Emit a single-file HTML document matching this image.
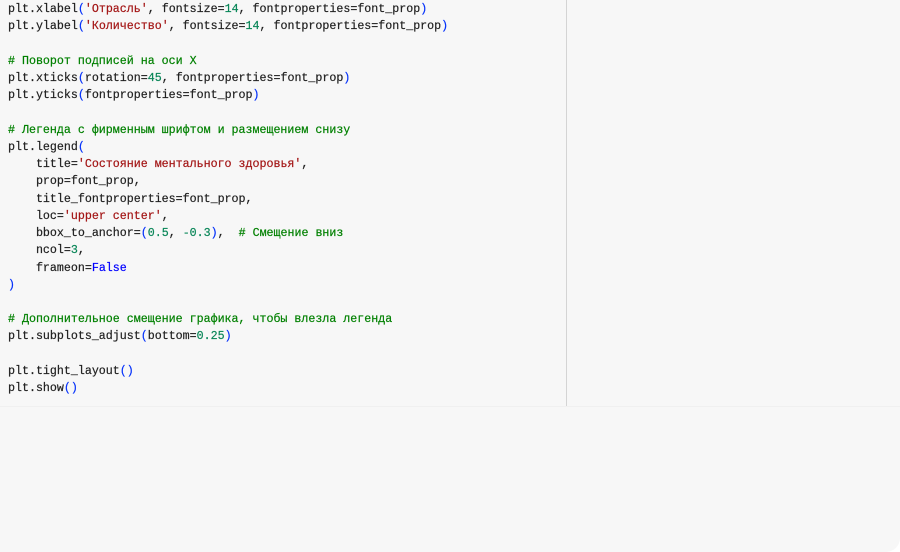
<!DOCTYPE html>
<html><head><meta charset="utf-8"><style>
html,body{margin:0;padding:0;width:900px;height:552px;background:#fff;overflow:hidden}
.wrap{position:absolute;left:0;top:0;width:900px;height:552px;background:#f7f7f7;border-bottom-right-radius:14px}
.vl{position:absolute;left:566px;top:0;width:1px;height:406px;background:#d4d4d4}
.hl{position:absolute;left:0;top:406px;width:900px;height:1px;background:#f0f0f0}
pre{position:absolute;left:8px;top:1px;margin:0;font-family:"Liberation Mono","DejaVu Sans Mono",monospace;font-size:11.65px;line-height:17.23px;color:#1f1f1f;-webkit-text-stroke:0.2px currentColor}
.s{color:#a31515}.c{color:#008000}.n{color:#098658}.p{color:#0431fa}.k{color:#0000ff}
</style></head><body><div class="wrap"><div class="vl"></div><div class="hl"></div>
<pre>plt.xlabel<span class="p">(</span><span class="s">'Отрасль'</span>, fontsize=<span class="n">14</span>, fontproperties=font_prop<span class="p">)</span>
plt.ylabel<span class="p">(</span><span class="s">'Количество'</span>, fontsize=<span class="n">14</span>, fontproperties=font_prop<span class="p">)</span>

<span class="c"># Поворот подписей на оси X</span>
plt.xticks<span class="p">(</span>rotation=<span class="n">45</span>, fontproperties=font_prop<span class="p">)</span>
plt.yticks<span class="p">(</span>fontproperties=font_prop<span class="p">)</span>

<span class="c"># Легенда с фирменным шрифтом и размещением снизу</span>
plt.legend<span class="p">(</span>
    title=<span class="s">'Состояние ментального здоровья'</span>,
    prop=font_prop,
    title_fontproperties=font_prop,
    loc=<span class="s">'upper center'</span>,
    bbox_to_anchor=<span class="p">(</span><span class="n">0.5</span>, <span class="n">-0.3</span><span class="p">)</span>,  <span class="c"># Смещение вниз</span>
    ncol=<span class="n">3</span>,
    frameon=<span class="k">False</span>
<span class="p">)</span>

<span class="c"># Дополнительное смещение графика, чтобы влезла легенда</span>
plt.subplots_adjust<span class="p">(</span>bottom=<span class="n">0.25</span><span class="p">)</span>

plt.tight_layout<span class="p">()</span>
plt.show<span class="p">()</span></pre></div></body></html>
